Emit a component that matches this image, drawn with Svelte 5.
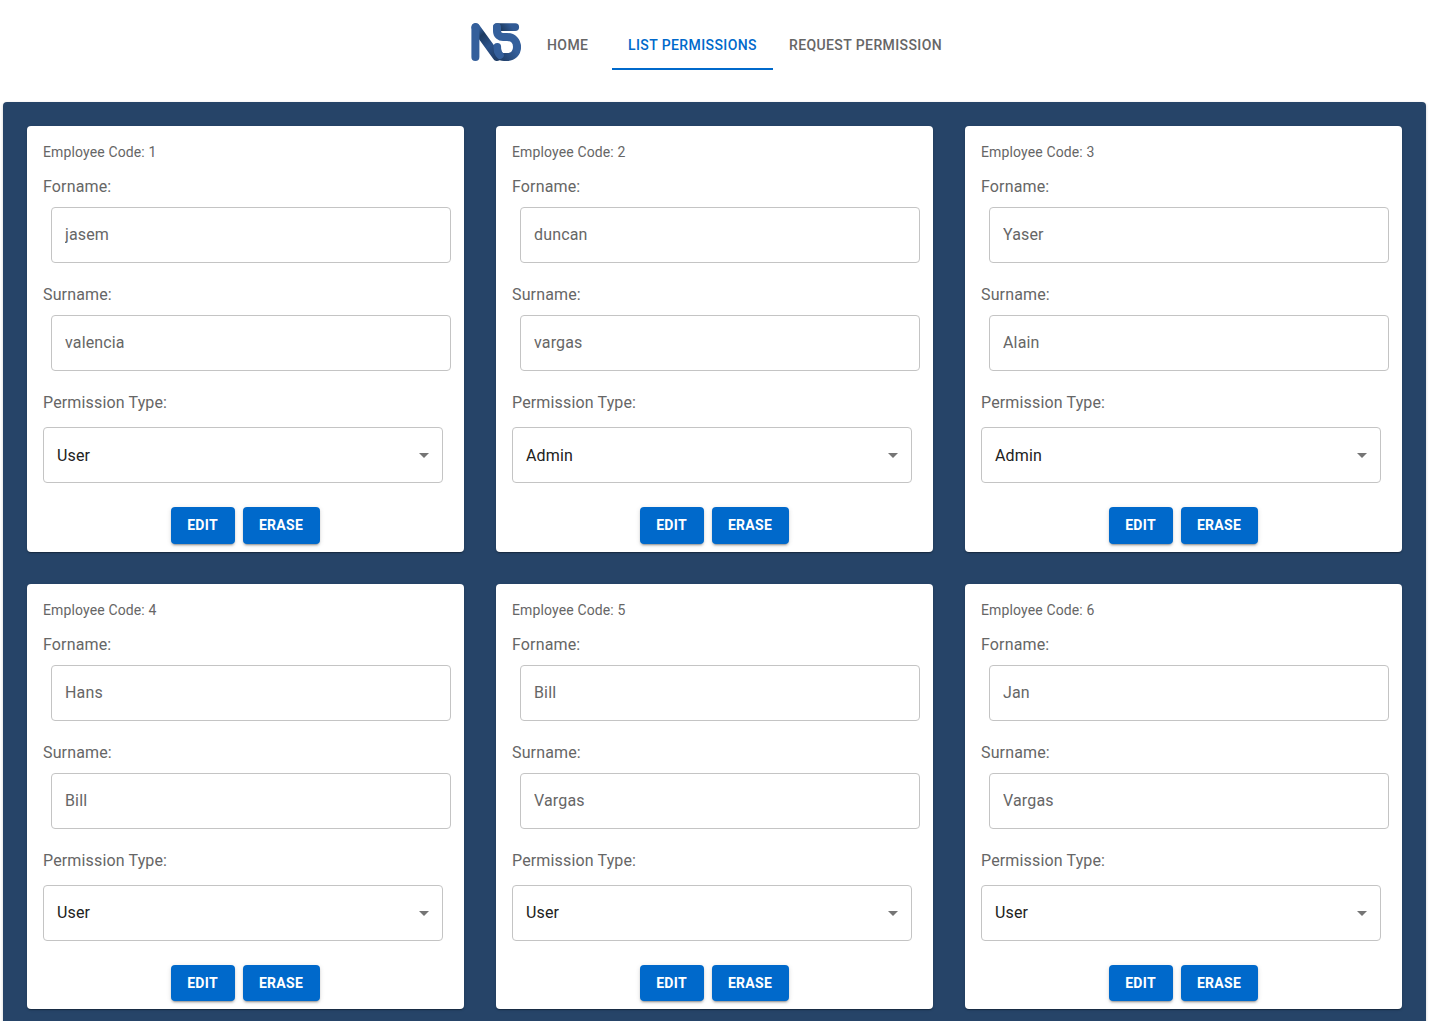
<script>
  const tabs = ['Home', 'List Permissions', 'Request Permission'];
  const active = 'List Permissions';
  const employees = [
    { code: 1, forname: 'jasem', surname: 'valencia', type: 'User' },
    { code: 2, forname: 'duncan', surname: 'vargas', type: 'Admin' },
    { code: 3, forname: 'Yaser', surname: 'Alain', type: 'Admin' },
    { code: 4, forname: 'Hans', surname: 'Bill', type: 'User' },
    { code: 5, forname: 'Bill', surname: 'Vargas', type: 'User' },
    { code: 6, forname: 'Jan', surname: 'Vargas', type: 'User' }
  ];
</script>

<header>
  <svg class="logo" width="52" height="40" viewBox="0 0 52 40" fill="none" stroke-width="8" stroke-linecap="round" stroke-linejoin="round">
    <defs>
      <linearGradient id="diag" gradientUnits="userSpaceOnUse" x1="6" y1="6" x2="28" y2="36">
        <stop offset="0.05" stop-color="#345f9b" />
        <stop offset="0.25" stop-color="#1d3a60" />
        <stop offset="0.6" stop-color="#2c528a" />
        <stop offset="1" stop-color="#1f3d66" />
      </linearGradient>
      <linearGradient id="bar" gradientUnits="userSpaceOnUse" x1="27" y1="10" x2="40" y2="2">
        <stop offset="0.1" stop-color="#345f9b" />
        <stop offset="0.3" stop-color="#1d3a60" />
        <stop offset="1" stop-color="#315a95" />
      </linearGradient>
      <linearGradient id="bowl" gradientUnits="userSpaceOnUse" x1="30" y1="37" x2="47" y2="26">
        <stop offset="0" stop-color="#1f3d66" />
        <stop offset="0.9" stop-color="#345f9b" />
      </linearGradient>
    </defs>
    <path d="M5.8 5.4 27 34.8" stroke="url(#diag)" stroke-width="8.6" />
    <path d="M5.4 5.2V35" stroke="#345f9b" />
    <path d="M27 5.1H45.2" stroke="url(#bar)" stroke-width="7.8" />
    <path d="M47 25C47 31 43 35 37 35H34C30 35 27.4 32 27.3 28" stroke="url(#bowl)" />
    <path d="M27 5.2V9C27 13 30 15 33 15H37C43 15 47 19 47 25" stroke="#345f9b" />
    <path d="M27.3 24.8V27.5C27.5 30 28.5 31.8 30 33.2" stroke="#345f9b" stroke-width="7.6" />
  </svg>
  <nav>
    {#each tabs as tab}
      <button class="tab" class:active={tab === active}>{tab}</button>
    {/each}
  </nav>
</header>

<main>
  {#each employees as e}
    <article>
      <p class="code">Employee Code: {e.code}</p>
      <label for="f{e.code}">Forname:</label>
      <input id="f{e.code}" placeholder={e.forname} />
      <label for="s{e.code}">Surname:</label>
      <input id="s{e.code}" placeholder={e.surname} />
      <span class="label">Permission Type:</span>
      <div class="select">
        <span>{e.type}</span>
        <svg width="24" height="24" viewBox="0 0 24 24" fill="#757575"><path d="M7 10l5 5 5-5z" /></svg>
      </div>
      <div class="actions">
        <button>Edit</button>
        <button>Erase</button>
      </div>
    </article>
  {/each}
</main>

<style>
  :global(body) {
    background: #fff;
    overflow: hidden;
    font-family: Roboto, 'Liberation Sans', sans-serif;
  }
  header {
    display: flex;
    height: 102px;
    padding: 22px 0 0 470px;
    box-sizing: border-box;
  }
  .logo {
    flex: none;
  }
  button {
    border: 0;
    font: 500 14px/24.5px Roboto, sans-serif;
    letter-spacing: 0.4px;
    text-transform: uppercase;
  }
  nav {
    display: flex;
    height: 48px;
    margin-left: 9px;
  }
  .tab {
    padding: 2px 16px 0;
    background: none;
    color: #666;
    border-bottom: 2px solid transparent;
    line-height: 17.5px;
    box-sizing: border-box;
  }
  .tab:first-child {
    width: 81px;
    padding-right: 24px;
    white-space: nowrap;
  }
  .tab.active {
    color: #0069cb;
    border-color: #0069cb;
  }
  main {
    display: grid;
    grid-template-columns: repeat(3, 437px);
    gap: 32px;
    margin: 0 4px 0 3px;
    padding: 24px;
    background: #264468;
    border-radius: 4px;
    box-shadow: 0 1px 3px rgba(0, 0, 0, 0.2);
  }
  article {
    display: flex;
    flex-direction: column;
    box-sizing: border-box;
    height: 425.5px;
    padding: 16px 13px 8px 16px;
    background: #fff;
    border-radius: 4px;
    box-shadow: 0 2px 1px -1px rgba(0, 0, 0, 0.2), 0 1px 1px rgba(0, 0, 0, 0.14), 0 1px 3px rgba(0, 0, 0, 0.12);
  }
  .code {
    margin: 0 0 13px;
    color: #666;
    font-size: 14px;
    line-height: 20px;
    letter-spacing: 0.13px;
  }
  label,
  .label {
    color: #666;
    font-size: 16px;
    line-height: 24px;
    letter-spacing: 0.15px;
  }
  input,
  .select {
    box-sizing: border-box;
    width: 400px;
    height: 56px;
    padding: 0 13px;
    border: 1px solid #c4c4c4;
    border-radius: 4px;
    font: 400 16px/23px Roboto, sans-serif;
    letter-spacing: 0.15px;
  }
  input {
    margin: 8px 0 20px 8px;
    padding-bottom: 1px;
    background: #fff;
  }
  input::placeholder {
    color: #666;
    opacity: 1;
  }
  .select {
    display: flex;
    align-items: center;
    justify-content: space-between;
    margin-top: 12px;
    padding-right: 6px;
    color: #212121;
  }
  .actions {
    display: flex;
    justify-content: center;
    gap: 8px;
    margin: 24px 0 0 -4px;
  }
  .actions button {
    height: 36.5px;
    padding: 6px 0;
    width: 77px;
    font-weight: 700;
    letter-spacing: 0.3px;
    background: #0069cb;
    color: #fff;
    border-radius: 4px;
    box-shadow: 0 3px 1px -2px rgba(0, 0, 0, 0.2), 0 2px 2px rgba(0, 0, 0, 0.14), 0 1px 5px rgba(0, 0, 0, 0.12);
  }
  .actions button:first-child {
    width: 64px;
  }
</style>
